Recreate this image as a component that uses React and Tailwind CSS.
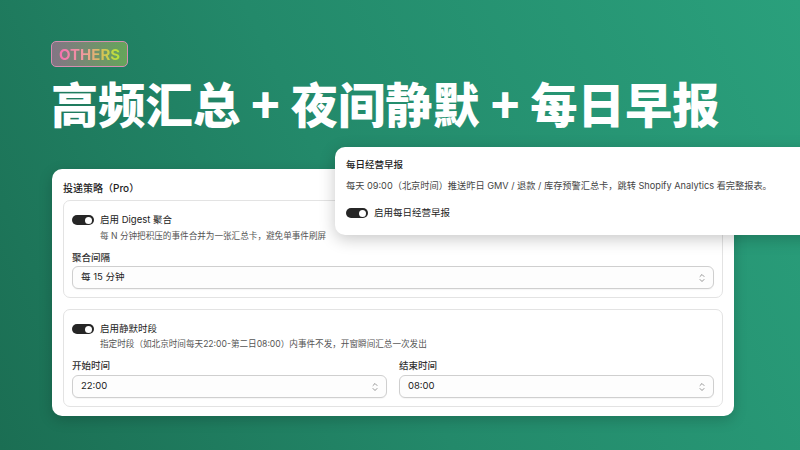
import React from "react";

function Toggle() {
    return (
        <span className="relative inline-block w-[22px] h-[10px] rounded-full bg-[#262626] shrink-0">
            <span className="absolute right-[2px] top-[1.5px] w-[7px] h-[7px] rounded-full bg-white" />
        </span>
    );
}

function Chevrons() {
    return (
        <svg width="6" height="10" viewBox="0 0 6 10" fill="none" stroke="#8a8a8a" strokeWidth="0.9" strokeLinecap="round" strokeLinejoin="round">
            <path d="M1 3.5 L3 1.5 L5 3.5" />
            <path d="M1 6.5 L3 8.5 L5 6.5" />
        </svg>
    );
}

function SelectBox({ value }) {
    return (
        <div className="h-[23px] flex items-center justify-between px-[8px] rounded-[6px] border border-[#cfcfcf] bg-[#fdfdfd] shadow-[0_1px_1px_rgba(0,0,0,0.04)]">
            <span className="text-[9.5px] text-[#222]">{value}</span>
            <Chevrons />
        </div>
    );
}

export default function App() {
    return (
        <div
            className="w-[800px] h-[450px] overflow-hidden relative bg-[linear-gradient(65deg,#1b6e53_0%,#23896a_45%,#2aa07c_100%)]"
            style={{ fontFamily: '"Inter", "Noto Sans CJK SC", sans-serif' }}
        >
            <div className="pt-[41px] pl-[51px]">
                <div className="inline-flex items-center h-[26px] px-[7px] rounded-[5px] border border-[#d58fb0] bg-[linear-gradient(90deg,rgba(230,110,170,0.5),rgba(185,210,80,0.45))]">
                    <span className="text-[15px] font-bold leading-none bg-[linear-gradient(90deg,#f670b0,#f09aa0_40%,#d8c058_70%,#b4e636)] bg-clip-text text-transparent">
                        OTHERS
                    </span>
                </div>
                <h1 className="mt-[7px] text-[47.3px] leading-[58px] font-black text-white" style={{ fontFamily: '"Noto Sans CJK SC", sans-serif' }}>
                    高频汇总 + 夜间静默 + 每日早报
                </h1>
            </div>

            <div className="absolute left-[52px] top-[169px] w-[682px] h-[247px] bg-white rounded-[10px] shadow-[0_4px_14px_rgba(0,0,0,0.18)] px-[11px] pt-[12px]">
                <div className="text-[10px] font-medium text-[#222] leading-[14px]">投递策略（Pro）</div>
                <div className="mt-[5px] rounded-[7px] border border-[#e3e3e3] px-[8px] pt-[13px] pb-[8px]">
                    <div className="flex items-center gap-[6px] h-[12px]">
                        <Toggle />
                        <span className="text-[9.5px] text-[#222]">启用 Digest 聚合</span>
                    </div>
                    <div className="mt-[3px] pl-[28px] text-[8.6px] text-[#555] leading-[14px]">每 N 分钟把积压的事件合并为一张汇总卡，避免单事件刷屏</div>
                    <div className="mt-[8px] text-[9.5px] font-medium text-[#333] leading-[14px]">聚合间隔</div>
                    <div className="mt-[1px]">
                        <SelectBox value="每 15 分钟" />
                    </div>
                </div>
                <div className="mt-[11px] rounded-[7px] border border-[#e3e3e3] px-[8px] pt-[13px] pb-[8px]">
                    <div className="flex items-center gap-[6px] h-[12px]">
                        <Toggle />
                        <span className="text-[9.5px] text-[#222]">启用静默时段</span>
                    </div>
                    <div className="mt-[2px] pl-[28px] text-[8.6px] text-[#555] leading-[14px]">指定时段（如北京时间每天22:00-第二日08:00）内事件不发，开窗瞬间汇总一次发出</div>
                    <div className="mt-[8px] grid grid-cols-2 gap-x-[12px]">
                        <div>
                            <div className="text-[9.5px] font-medium text-[#333] leading-[14px]">开始时间</div>
                            <div className="mt-[2px]">
                                <SelectBox value="22:00" />
                            </div>
                        </div>
                        <div>
                            <div className="text-[9.5px] font-medium text-[#333] leading-[14px]">结束时间</div>
                            <div className="mt-[2px]">
                                <SelectBox value="08:00" />
                            </div>
                        </div>
                    </div>
                </div>
            </div>

            <div className="absolute left-[335px] top-[147px] w-[490px] h-[88px] bg-white rounded-[10px] shadow-[0_4px_16px_rgba(0,0,0,0.22)] pl-[11px] pt-[11px]">
                <div className="text-[9.5px] font-medium text-[#222] leading-[14px]">每日经营早报</div>
                <div className="mt-[7px] text-[9.2px] text-[#444] leading-[14px]">每天 09:00（北京时间）推送昨日 GMV / 退款 / 库存预警汇总卡，跳转 Shopify Analytics 看完整报表。</div>
                <div className="mt-[14px] flex items-center gap-[6px] h-[12px]">
                    <Toggle />
                    <span className="text-[9.5px] text-[#222]">启用每日经营早报</span>
                </div>
            </div>
        </div>
    );
}
